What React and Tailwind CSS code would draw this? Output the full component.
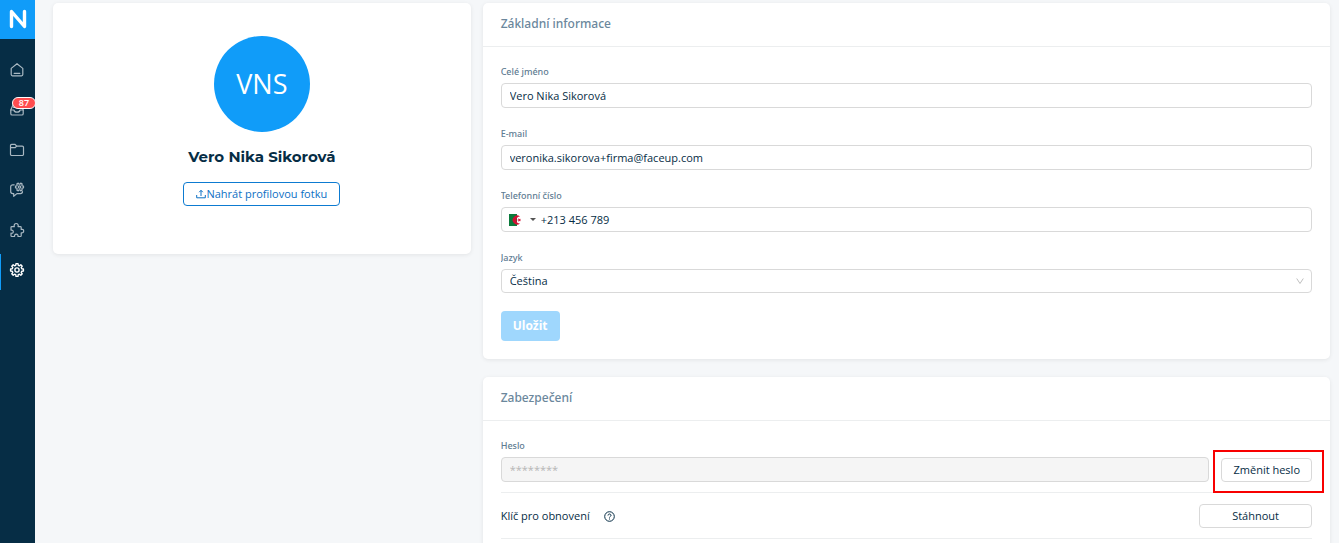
import { useState } from "react";
import clsx from "clsx";

const menu = [
  { name: "home", label: "Domů" },
  { name: "inbox", label: "Hlášení", badge: 87 },
  { name: "folder", label: "Soubory" },
  { name: "chat", label: "Nastavení komunikace" },
  { name: "puzzle", label: "Integrace" },
  { name: "settings", label: "Nastavení", active: true },
];

function GearPath({ teeth = 8, cx, cy, outer, inner }) {
  const step = (Math.PI * 2) / teeth;
  const at = (r, a) => `${(cx + r * Math.cos(a)).toFixed(2)} ${(cy + r * Math.sin(a)).toFixed(2)}`;
  let d = "";
  for (let i = 0; i < teeth; i++) {
    const a = i * step;
    d += `${i ? "L" : "M"}${at(inner, a - step * 0.32)}L${at(outer, a - step * 0.2)}L${at(outer, a + step * 0.2)}L${at(inner, a + step * 0.32)}`;
  }
  return <path d={d + "Z"} />;
}

function MenuIcon({ name }) {
  return (
    <svg
      className="h-4 w-4"
      viewBox="0 0 16 16"
      fill="none"
      stroke="currentColor"
      strokeWidth="1.2"
      strokeLinejoin="round"
      strokeLinecap="round"
      aria-hidden="true"
    >
      {name === "home" && (
        <>
          <path d="M2.2 6.4 8 1.700l5.800 4.700v6.200a1.200 1.200 0 0 1-1.200 1.200H3.400a1.200 1.200 0 0 1-1.200-1.200Z" />
          <path d="M5.200 11.400h5.600" />
        </>
      )}
      {name === "inbox" && (
        <>
          <path d="M1.800 8 3.600 3.700a1.400 1.400 0 0 1 1.300-.9h6.200a1.400 1.400 0 0 1 1.300.9L14.200 8v3.700a1.300 1.300 0 0 1-1.300 1.300H3.100a1.300 1.300 0 0 1-1.300-1.300Z" />
          <path d="M1.800 8h3.100c.3 1.400 1.500 2.200 3.100 2.200s2.800-.8 3.100-2.200h3.100M4.500 5.500h7" />
        </>
      )}
      {name === "folder" && (
        <>
          <path d="M1.500 12.300V3.500a1.200 1.200 0 0 1 1.200-1.200h3.400l1.500 1.800h5.700a1.200 1.200 0 0 1 1.200 1.200v7a1.200 1.200 0 0 1-1.200 1.200H2.700a1.200 1.200 0 0 1-1.200-1.200Z" />
          <path d="M1.600 5.700h4.700l1.300-1.500" />
        </>
      )}
      {name === "chat" && (
        <>
          <path d="M5.200 2.800H3.700A2 2 0 0 0 1.700 4.800v4.800a2 2 0 0 0 2 2h1v2.700l3.200-2.700h3.600a2 2 0 0 0 2-2" />
          <GearPath cx={10.5} cy={5} outer={4.1} inner={3} teeth={6} />
          <circle cx="10.5" cy="5" r="1.2" />
        </>
      )}
      {name === "puzzle" && (
        <path d="M2 5.500a.8.8 0 0 1 .8-.8h2.500c-.5-1.900.4-3.200 1.900-3.200s2.400 1.300 1.900 3.200h2.300a.8.8 0 0 1 .8.8v1.900c1.500-.4 2.500.4 2.500 1.700s-1 2.100-2.500 1.700v2.900a.8.8 0 0 1-.8.8H9c.3-1.400-.4-2.300-1.700-2.300s-2 .9-1.700 2.300H2.800a.8.8 0 0 1-.8-.8v-2.500c1.500.3 2.300-.4 2.300-1.500S3.500 7.900 2 8.200Z" />
      )}
      {name === "settings" && (
        <g strokeWidth="1.4">
          <GearPath cx={8} cy={8} outer={6.5} inner={4.9} />
          <circle cx="8" cy="8" r="2.1" />
        </g>
      )}
    </svg>
  );
}

function Sidebar() {
  return (
    <aside className="w-[35px] shrink-0 overflow-hidden bg-[#062d45]">
      <a href="#" aria-label="Úvod" className="flex h-[39px] items-center justify-center bg-[#109cf9] pb-0.5">
        <svg className="h-5 w-[18px]" viewBox="0 0 18 20" fill="none" aria-hidden="true">
          <path
            d="M2.500 17.500v-15l13 15v-15"
            stroke="#fff"
            strokeWidth="3.4"
            strokeLinejoin="round"
            strokeLinecap="round"
          />
        </svg>
      </a>
      <nav className="flex flex-col gap-1 pt-[15px]">
        {menu.map((item) => (
          <a
            key={item.name}
            href="#"
            aria-label={item.label}
            className={clsx(
              "relative flex h-9 items-center justify-center border-l pr-0.5 pb-1",
              item.active ? "border-[#109cf9] text-white" : "border-transparent text-[#a9b8c2]"
            )}
          >
            <MenuIcon name={item.name} />
            {item.badge && (
              <span className="absolute top-[3px] left-[11px] flex h-3 w-6 items-center justify-center rounded-full border border-white bg-[#ff4d4f] text-[9px] font-semibold text-white">
                {item.badge}
              </span>
            )}
          </a>
        ))}
      </nav>
    </aside>
  );
}

function Card({ title, children }) {
  return (
    <section className="rounded-[5px] bg-white shadow-[0_1px_4px_rgba(0,0,0,0.08)]">
      <h2 className="flex h-11 items-center border-b border-[#eceeef] px-[18px] pb-0.5 font-['Noto_Sans',sans-serif] text-[12px] font-medium text-[#6b879c]">
        {title}
      </h2>
      <div className="p-[18px]">{children}</div>
    </section>
  );
}

function Label({ htmlFor, children }) {
  return (
    <label
      htmlFor={htmlFor}
      className="mb-1 block overflow-hidden font-['Noto_Sans',sans-serif] text-[9px] leading-[14px] font-medium text-[#5f7d93]"
    >
      {children}
    </label>
  );
}

const inputClass =
  "block h-[25px] w-full rounded-[4px] border border-[#d9d9d9] bg-white px-2 text-[11px] text-[#062d45] outline-none";
const buttonClass =
  "h-6 rounded-[4px] border border-[#d9d9d9] bg-white text-[11px] font-medium text-[#062d45]";

function AlgeriaFlag() {
  return (
    <svg className="h-3 w-3" viewBox="0 0 12 12" aria-hidden="true">
      <path d="M0 0h8v12H0z" fill="#0b7a3b" />
      <path d="M8 0h4v12H8z" fill="#fff" />
      <path d="M11 2.500a4.500 4.500 0 1 0 0 7 3.400 3.400 0 1 1 0-7Z" fill="#d21034" />
      <path d="m8 6 1.500-.5.100-1.600.9 1.300 1.500-.4L11.100 6l.9 1.200-1.500-.4-.9 1.300-.1-1.600Z" fill="#d21034" />
    </svg>
  );
}

export default function ProfileSettings() {
  const [form, setForm] = useState({
    name: "Vero Nika Sikorová",
    email: "veronika.sikorova+firma@faceup.com",
    phone: "+213 456 789",
    language: "cs",
  });

  const onChange = (e) => {
    setForm({ ...form, [e.target.name]: e.target.value });
  };

  return (
    <div className="flex h-screen overflow-hidden bg-[#f5f7f9] font-['Open_Sans','Noto_Sans',sans-serif] text-[#062d45]">
      <Sidebar />
      <main className="grid flex-1 grid-cols-3 items-start gap-3 pt-[3px] pr-[9px] pl-[18px]">
        <section className="flex flex-col items-center rounded-[5px] bg-white px-4 pt-[33px] pb-12 shadow-[0_1px_4px_rgba(0,0,0,0.08)]">
          <div className="flex h-24 w-24 items-center justify-center rounded-full bg-[#109cf9] text-[27px] text-white">
            VNS
          </div>
          <h1 className="mt-[14px] mb-[14px] font-['Montserrat','Open_Sans',sans-serif] text-[15px] leading-[22px] font-bold">
            {form.name}
          </h1>
          <button
            type="button"
            className="flex h-6 items-center rounded-[4px] border border-[#0d7bd1] px-3 text-[11px] text-[#0c6fc4]"
          >
            <svg className="h-[10px] w-[10px]" viewBox="0 0 10 10" fill="none" stroke="currentColor" aria-hidden="true">
              <path d="M.7 6v2.800h8.600V6M5 7V1.500M3.200 3.200 5 1.300l1.800 1.900" />
            </svg>
            Nahrát profilovou fotku
          </button>
        </section>

        <div className="col-span-2 flex flex-col gap-[18px]">
          <Card title="Základní informace">
            <form onSubmit={(e) => e.preventDefault()}>
              <div className="flex flex-col gap-[19px]">
                <div>
                  <Label htmlFor="name">Celé jméno</Label>
                  <input id="name" name="name" className={inputClass} value={form.name} onChange={onChange} />
                </div>
                <div>
                  <Label htmlFor="email">E-mail</Label>
                  <input id="email" name="email" className={inputClass} value={form.email} onChange={onChange} />
                </div>
                <div>
                  <Label htmlFor="phone">Telefonní číslo</Label>
                  <div className="flex h-[25px] items-center rounded-[4px] border border-[#d9d9d9] bg-white pl-[7px]">
                    <button type="button" aria-label="Předvolba země" className="flex items-center gap-[9px]">
                      <AlgeriaFlag />
                      <svg className="h-[3px] w-[6px]" viewBox="0 0 6 3" aria-hidden="true">
                        <path d="M0 0h6L3 3z" fill="#555" />
                      </svg>
                    </button>
                    <input
                      id="phone"
                      name="phone"
                      className="h-full min-w-0 flex-1 bg-transparent pl-[5px] text-[11px] outline-none"
                      value={form.phone}
                      onChange={onChange}
                    />
                  </div>
                </div>
                <div>
                  <Label htmlFor="language">Jazyk</Label>
                  <div className="relative">
                    <select
                      id="language"
                      name="language"
                      className="block h-6 w-full appearance-none rounded-[4px] border border-[#d9d9d9] bg-white px-2 text-[11px] outline-none"
                      value={form.language}
                      onChange={onChange}
                    >
                      <option value="cs">Čeština</option>
                      <option value="en">English</option>
                    </select>
                    <svg
                      className="pointer-events-none absolute top-2 right-2 h-2 w-2"
                      viewBox="0 0 8 8"
                      fill="none"
                      stroke="#bfbfbf"
                      aria-hidden="true"
                    >
                      <path d="m.7 1.500 3.300 5 3.300-5" />
                    </svg>
                  </div>
                </div>
              </div>
              <button
                type="submit"
                className="mt-[18px] block h-[30px] rounded-[4px] bg-[#9fd7fd] px-3 text-[12px] font-bold text-white"
              >
                Uložit
              </button>
            </form>
          </Card>

          <Card title="Zabezpečení">
            <div className="flex items-end gap-3 border-b border-[#eceeef] pb-[10px]">
              <div className="flex-1">
                <Label htmlFor="password">Heslo</Label>
                <input
                  id="password"
                  disabled
                  value="********"
                  className="block h-[25px] w-full rounded-[4px] border border-[#d9d9d9] bg-[#f5f5f5] px-2 text-[11px] text-[#b5b5b5]"
                />
              </div>
              <div className="relative">
                <button type="button" className={clsx(buttonClass, "block px-[11px]")}>
                  Změnit heslo
                </button>
                <div className="pointer-events-none absolute -top-2 -right-3 -bottom-[11px] -left-2 border-2 border-[#f80000]" />
              </div>
            </div>
            <div className="flex items-center justify-between border-b border-[#eceeef] pt-[11px] pb-[10px]">
              <div className="flex items-center gap-[14px] text-[11px]">
                Klíč pro obnovení
                <svg className="h-[11px] w-[11px]" viewBox="0 0 11 11" fill="none" stroke="#062d45" aria-hidden="true">
                  <circle cx="5.5" cy="5.5" r="4.8" />
                  <path d="M4 4.500c0-2 3-2 3 0 0 .9-1.500 1-1.500 2M5.500 7.500v1" />
                </svg>
              </div>
              <button type="button" className={clsx(buttonClass, "px-8")}>
                Stáhnout
              </button>
            </div>
          </Card>
        </div>
      </main>
    </div>
  );
}
